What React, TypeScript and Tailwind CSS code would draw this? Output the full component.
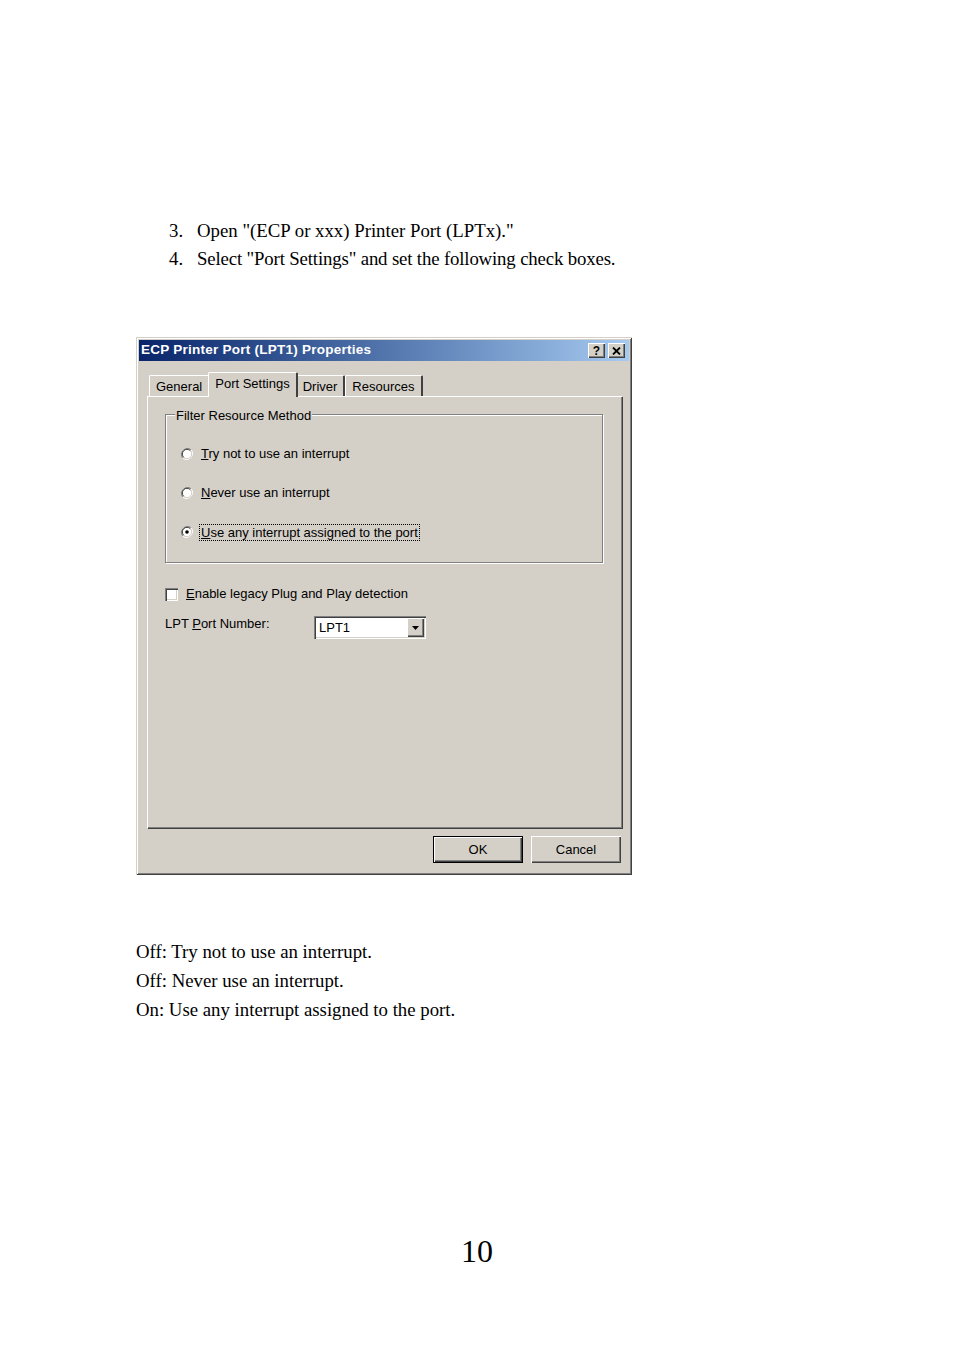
import React from "react";

const serif = { fontFamily: '"Liberation Serif", "Times New Roman", serif' };
const ui = { fontFamily: '"Liberation Sans", Arial, sans-serif' };

function Radio({ checked }: { checked?: boolean }) {
  return (
    <svg width="12" height="12" viewBox="0 0 12 12" className="shrink-0">
      <path d="M10.2 1.8 A6 6 0 0 0 1.8 10.2" fill="none" stroke="#808080" strokeWidth="1" />
      <path d="M1.8 10.2 A6 6 0 0 0 10.2 1.8" fill="none" stroke="#ffffff" strokeWidth="1" />
      <circle cx="6" cy="6" r="4.6" fill="#ffffff" />
      <path d="M9.3 2.7 A4.6 4.6 0 0 0 2.7 9.3" fill="none" stroke="#404040" strokeWidth="1" />
      <path d="M2.7 9.3 A4.6 4.6 0 0 0 9.3 2.7" fill="none" stroke="#d4d0c8" strokeWidth="1" />
      {checked && <circle cx="6" cy="6" r="1.8" fill="#000" />}
    </svg>
  );
}

function Tab({ label, selected }: { label: string; selected?: boolean }) {
  if (selected) {
    return (
      <div className="relative z-10 -mb-[1px] h-[25px] px-[6px] -mx-[2px] flex items-start pt-[1px] bg-[#d4d0c8] border-l border-t border-white border-r-[2px] border-r-[#404040] rounded-tl-[2px] rounded-tr-[2px]">
        <span>{label}</span>
      </div>
    );
  }
  return (
    <div className="h-[21px] pl-[6px] pr-[6px] flex items-start pt-[1px] bg-[#d4d0c8] border-l border-t border-white border-r-[2px] border-r-[#404040] rounded-tl-[2px] rounded-tr-[2px]">
      <span>{label}</span>
    </div>
  );
}

function Button({ children, isDefault }: { children: React.ReactNode; isDefault?: boolean }) {
  return (
    <div
      className={
        "w-[90px] h-[27px] flex items-center justify-center bg-[#d4d0c8] " +
        (isDefault
          ? "border border-black shadow-[inset_1px_1px_0_#fff,inset_-1px_-1px_0_#404040,inset_-2px_-2px_0_#808080]"
          : "shadow-[inset_1px_1px_0_#fff,inset_-1px_-1px_0_#404040,inset_-2px_-2px_0_#808080]")
      }
    >
      {children}
    </div>
  );
}

export default function App() {
  return (
    <div className="w-[954px] min-h-[1351px] bg-white text-black">
      <div className="pt-[217px]" style={serif}>
        <div className="text-[18.8px] leading-[28px] pl-[169px]">
          <div className="flex">
            <span className="w-[28px]">3.</span>
            <span>Open "(ECP or xxx) Printer Port (LPTx)."</span>
          </div>
          <div className="flex">
            <span className="w-[28px]">4.</span>
            <span className="tracking-[-0.15px]">Select "Port Settings" and set the following check boxes.</span>
          </div>
        </div>
      </div>

      <div
        className="ml-[136px] mt-[64px] w-[496px] h-[538px] p-[3px] bg-[#d4d0c8] shadow-[inset_1px_1px_0_#d4d0c8,inset_-1px_-1px_0_#404040,inset_2px_2px_0_#fff,inset_-2px_-2px_0_#808080] text-[13px] text-black"
        style={ui}
      >
        <div className="h-[21px] flex items-center justify-between pl-[2px] pr-[4px] bg-gradient-to-r from-[#0a246a] to-[#a6caf0]">
          <span className="text-white font-bold text-[13.5px] tracking-[0.25px]">ECP Printer Port (LPT1) Properties</span>
          <div className="flex gap-[3px]">
            <div className="w-[17px] h-[15px] bg-[#d4d0c8] flex items-center justify-center font-bold text-[12px] leading-none shadow-[inset_1px_1px_0_#fff,inset_-1px_-1px_0_#404040,inset_-2px_-2px_0_#808080]">
              ?
            </div>
            <div className="w-[17px] h-[15px] bg-[#d4d0c8] flex items-center justify-center shadow-[inset_1px_1px_0_#fff,inset_-1px_-1px_0_#404040,inset_-2px_-2px_0_#808080]">
              <svg width="9" height="8" viewBox="0 0 9 8">
                <path d="M1 0.5 L8 7.5 M8 0.5 L1 7.5" stroke="#000" strokeWidth="1.8" />
              </svg>
            </div>
          </div>
        </div>

        <div className="pl-[8px] pt-[11px]">
          <div className="flex items-end h-[24px] pl-[2px]">
            <Tab label="General" />
            <Tab label="Port Settings" selected />
            <Tab label="Driver" />
            <Tab label="Resources" />
          </div>
          <div className="w-[475px] h-[432px] bg-[#d4d0c8] border-l border-t border-white shadow-[inset_-1px_-1px_0_#808080,1px_1px_0_#404040] pl-[17px] pt-[17px]">
            <div className="relative w-[438px] h-[149px] border border-[#808080] shadow-[1px_1px_0_#fff,inset_1px_1px_0_#fff] pl-[15px] pt-[29px]">
              <span className="absolute -top-[9px] left-[9px] px-[1px] bg-[#d4d0c8]">Filter Resource Method</span>
              <div className="flex flex-col gap-[19px]">
                <div className="h-[20px] flex items-center gap-[8px]">
                  <Radio />
                  <span>
                    <u>T</u>ry not to use an interrupt
                  </span>
                </div>
                <div className="h-[20px] flex items-center gap-[8px]">
                  <Radio />
                  <span>
                    <u>N</u>ever use an interrupt
                  </span>
                </div>
                <div className="h-[20px] flex items-center gap-[6px]">
                  <Radio checked />
                  <span className="border border-dotted border-black px-[1px] leading-[15px]">
                    <u>U</u>se any interrupt assigned to the port
                  </span>
                </div>
              </div>
            </div>

            <div className="mt-[21px] h-[20px] flex items-center gap-[8px]">
              <div className="w-[13px] h-[13px] bg-white shadow-[inset_1px_1px_0_#808080,inset_2px_2px_0_#404040,inset_-1px_-1px_0_#fff,inset_-2px_-2px_0_#d4d0c8]" />
              <span>
                <u>E</u>nable legacy Plug and Play detection
              </span>
            </div>

            <div className="mt-[12px] flex items-center">
              <span className="w-[149px] -mt-[8px]">
                LPT <u>P</u>ort Number:
              </span>
              <div className="w-[112px] h-[23px] bg-white flex items-center justify-between p-[2px] shadow-[inset_1px_1px_0_#808080,inset_2px_2px_0_#404040,inset_-1px_-1px_0_#fff,inset_-2px_-2px_0_#d4d0c8]">
                <span className="pl-[3px] pt-[1px]">LPT1</span>
                <div className="w-[17px] h-[19px] bg-[#d4d0c8] flex items-center justify-center shadow-[inset_1px_1px_0_#fff,inset_-1px_-1px_0_#404040,inset_-2px_-2px_0_#808080]">
                  <svg width="7" height="4" viewBox="0 0 7 4">
                    <path d="M0 0 H7 L3.5 4 Z" fill="#000" />
                  </svg>
                </div>
              </div>
            </div>
          </div>

          <div className="flex justify-end gap-[8px] pr-[8px] mt-[8px] w-[482px]">
            <Button isDefault>OK</Button>
            <Button>Cancel</Button>
          </div>
        </div>
      </div>

      <div className="ml-[136px] mt-[62px] text-[18.8px] leading-[29px]" style={serif}>
        <div>Off: Try not to use an interrupt.</div>
        <div>Off: Never use an interrupt.</div>
        <div>On: Use any interrupt assigned to the port.</div>
      </div>

      <div className="mt-[207px] text-center text-[32px] leading-[40px]" style={serif}>
        10
      </div>
    </div>
  );
}
